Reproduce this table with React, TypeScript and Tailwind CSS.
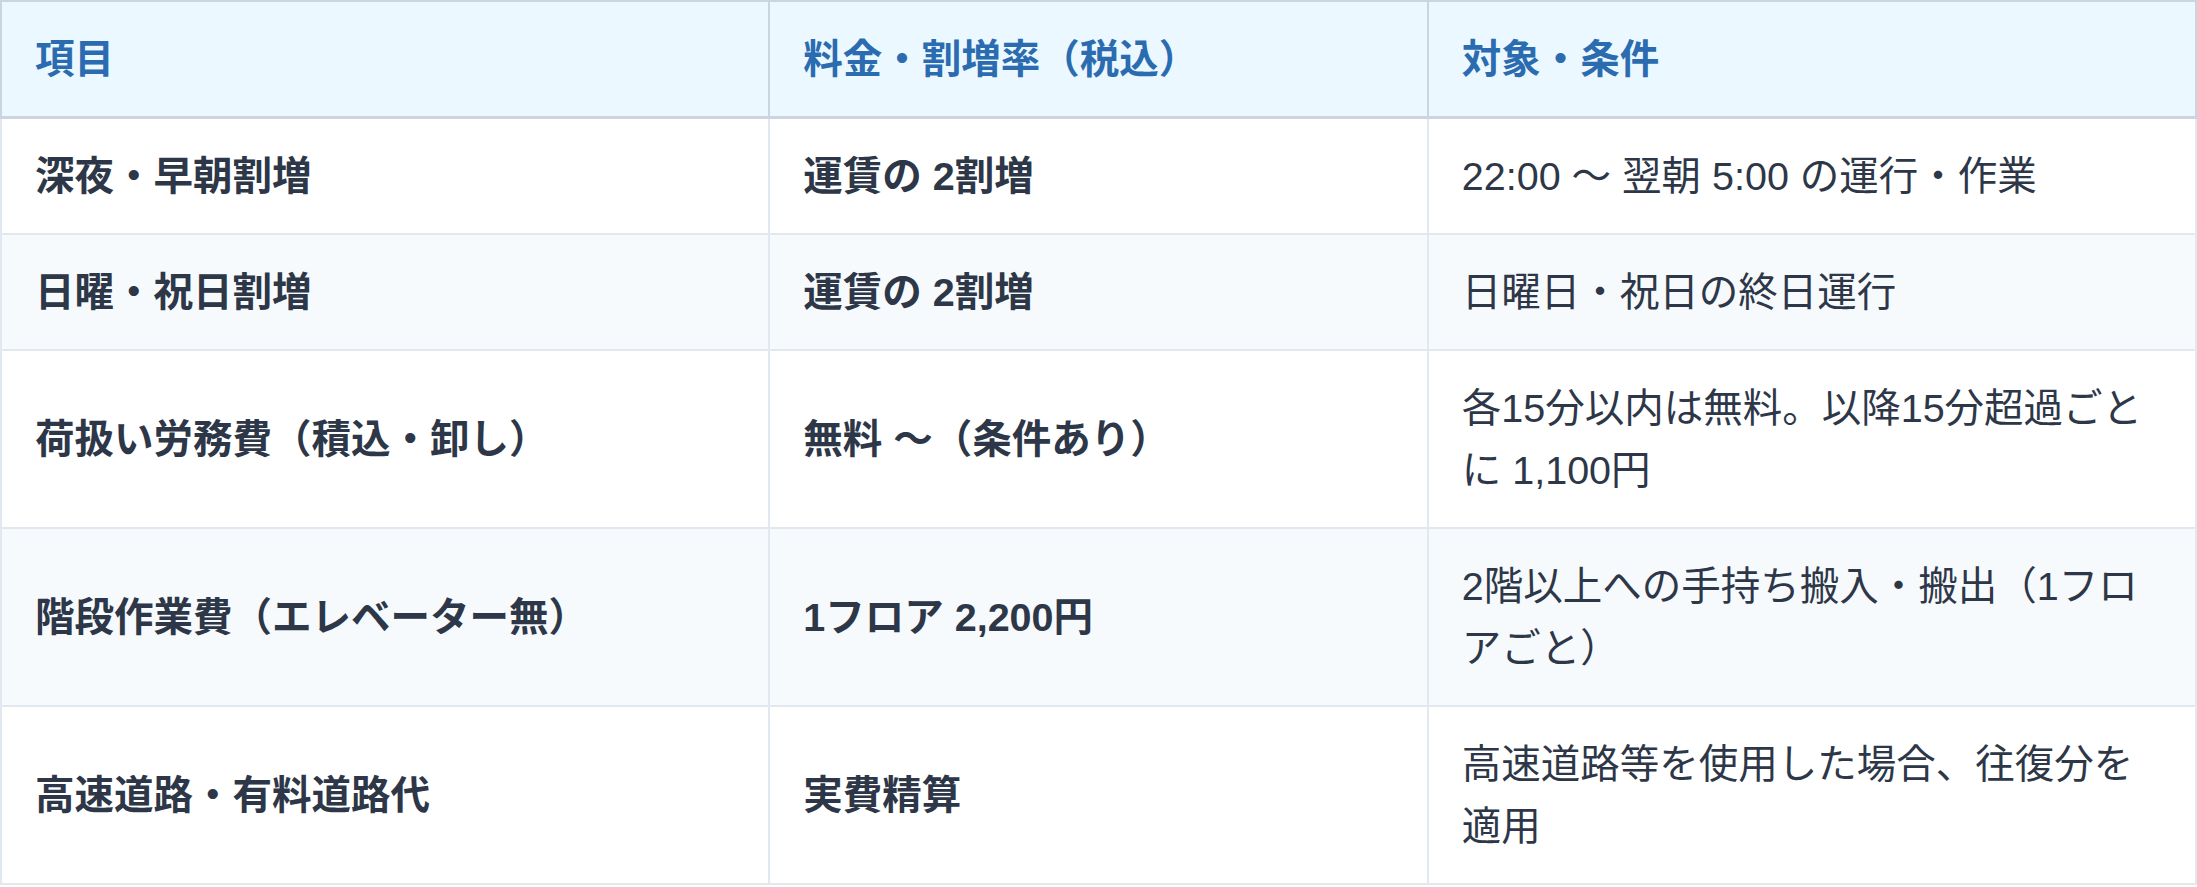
const rows = [
  { item: '深夜・早朝割増', price: '運賃の 2割増', note: '22:00 〜 翌朝 5:00 の運行・作業' },
  { item: '日曜・祝日割増', price: '運賃の 2割増', note: '日曜日・祝日の終日運行' },
  { item: '荷扱い労務費（積込・卸し）', price: '無料 〜（条件あり）', note: '各15分以内は無料。以降15分超過ごとに 1,100円' },
  { item: '階段作業費（エレベーター無）', price: '1フロア 2,200円', note: '2階以上への手持ち搬入・搬出（1フロアごと）' },
  { item: '高速道路・有料道路代', price: '実費精算', note: '高速道路等を使用した場合、往復分を適用' },
];

const App = () => {
  return (
    <div className="w-full bg-white font-['Liberation_Sans','Noto_Sans_CJK_JP',sans-serif] text-[39.5px] leading-[62px] text-[#2d3748]">
      <table className="w-full table-fixed border-collapse">
        <thead>
          <tr className="bg-[#ebf8ff] text-left text-[#2b6cb0]">
            <th className="w-[35%] border-2 border-b-[3px] border-[#cbd5e0] px-[33px] py-[26px] font-bold">項目</th>
            <th className="w-[30%] border-2 border-b-[3px] border-[#cbd5e0] px-[33px] py-[26px] font-bold">料金・割増率（税込）</th>
            <th className="w-[35%] border-2 border-b-[3px] border-[#cbd5e0] px-[33px] py-[26px] font-bold">対象・条件</th>
          </tr>
        </thead>
        <tbody>
          {rows.map((row, i) => (
            <tr key={row.item} className={i % 2 === 1 ? 'bg-[#f7fafc]' : 'bg-white'}>
              <td className="border-2 border-[#e2e8f0] px-[33px] py-[26px] align-middle font-bold">{row.item}</td>
              <td className="border-2 border-[#e2e8f0] px-[33px] py-[26px] align-middle font-bold">{row.price}</td>
              <td className="border-2 border-[#e2e8f0] px-[33px] py-[26px] align-middle">{row.note}</td>
            </tr>
          ))}
        </tbody>
      </table>
    </div>
  );
};

export default App;
